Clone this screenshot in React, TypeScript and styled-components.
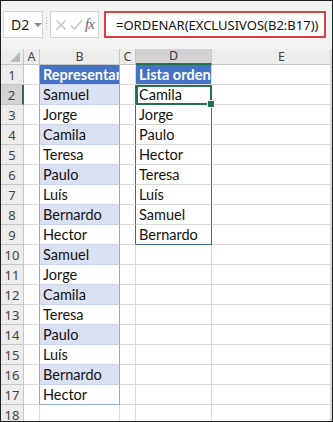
import React from "react";
import styled, { createGlobalStyle } from "styled-components";

const GlobalStyle = createGlobalStyle`
  html, body {
    margin: 0;
    padding: 0;
    background: #ffffff;
  }
`;

const cellFont = `"Lato", "Noto Sans", "Liberation Sans", sans-serif`;
const uiFont = `"Noto Sans", "Open Sans", "Liberation Sans", sans-serif`;

const grid = "#d9d9d9";
const tableEdge = "#8ea9db";
const spillEdge = "#3d63a8";
const green = "#217346";

const Frame = styled.div`
  width: 333px;
  height: 422px;
  box-sizing: border-box;
  border: 1px solid #1e1e1e;
  background: #f3f3f3;
  overflow: hidden;
  display: flex;
  flex-direction: column;
`;

const FormulaBar = styled.div`
  height: 48px;
  flex: none;
  box-sizing: border-box;
  padding: 10px 0 0 2px;
  display: flex;
  align-items: flex-start;
`;

const NameBox = styled.div`
  width: 40px;
  height: 27px;
  box-sizing: border-box;
  background: #fff;
  border: 1px solid #d4d4d4;
  display: flex;
  align-items: center;
  padding-left: 7px;
  font-family: ${uiFont};
  font-size: 14px;
  color: #222;
`;

const Caret = styled.span`
  margin-left: 5px;
  width: 0;
  height: 0;
  border-left: 4px solid transparent;
  border-right: 4px solid transparent;
  border-top: 4px solid #8a8a8a;
`;

const Grip = styled.div`
  width: 7px;
  height: 27px;
  display: flex;
  justify-content: center;
  align-items: center;
  &::before {
    content: "";
    width: 1px;
    height: 15px;
    background: repeating-linear-gradient(
      to bottom,
      #b8b8b8 0 1px,
      transparent 1px 3px
    );
  }
`;

const ActionBox = styled.div`
  width: 49px;
  height: 27px;
  box-sizing: border-box;
  background: #fff;
  border: 1px solid #d4d4d4;
  display: flex;
  align-items: center;
  justify-content: space-around;
  padding: 0 3px;
`;

const Fx = styled.span`
  font-family: "Liberation Serif", serif;
  font-style: italic;
  font-size: 15px;
  color: #666;
  letter-spacing: -1px;
`;

const FormulaInput = styled.div`
  margin-left: 5px;
  width: 222px;
  height: 27px;
  box-sizing: border-box;
  background: #fff;
  border: 2px solid #d9423f;
  display: flex;
  align-items: center;
  padding-left: 10px;
  font-family: ${uiFont};
  font-size: 13px;
  color: #111;
  white-space: nowrap;
  overflow: hidden;
`;

const SheetClip = styled.div`
  flex: 1;
  overflow: hidden;
  background: #fff;
  border-right: 2px solid #dcdcdc;
`;

const Sheet = styled.div`
  display: grid;
  grid-template-columns: 23px 16px 80px 16px 76px 140px;
  grid-template-rows: 16px;
  grid-auto-rows: 20px;
`;

const ColHead = styled.div<{ $active?: boolean }>`
  box-sizing: border-box;
  background: ${({ $active }) => ($active ? "#d2d2d2" : "#ececec")};
  border-right: 1px solid #c6c6c6;
  border-bottom: ${({ $active }) =>
    $active ? `2px solid ${green}` : "1px solid #c6c6c6"};
  font-family: ${uiFont};
  font-size: 12.5px;
  line-height: 14px;
  color: ${({ $active }) => ($active ? "#3c3c3c" : "#444")};
  display: flex;
  align-items: center;
  justify-content: center;
`;

const Corner = styled.div`
  position: relative;
  box-sizing: border-box;
  background: #ececec;
  border-right: 1px solid #c6c6c6;
  border-bottom: 1px solid #c6c6c6;
  &::after {
    content: "";
    position: absolute;
    right: 3px;
    bottom: 2px;
    width: 0;
    height: 0;
    border-left: 10px solid transparent;
    border-bottom: 10px solid #b9b9b9;
  }
`;

const RowHead = styled.div<{ $active?: boolean }>`
  box-sizing: border-box;
  background: ${({ $active }) => ($active ? "#d2d2d2" : "#ececec")};
  border-right: ${({ $active }) =>
    $active ? `2px solid ${green}` : "1px solid #c6c6c6"};
  border-bottom: 1px solid #c6c6c6;
  font-family: ${uiFont};
  font-size: 13px;
  color: #444;
  display: flex;
  align-items: center;
  justify-content: center;
`;

type CellProps = {
  $bg?: string;
  $head?: boolean;
  $right?: string;
  $bottom?: string;
  $selected?: boolean;
};

const Cell = styled.div<CellProps>`
  position: relative;
  box-sizing: border-box;
  background: ${({ $bg }) => $bg || "#fff"};
  border-right: 1px solid ${({ $right }) => $right || grid};
  border-bottom: 1px solid ${({ $bottom }) => $bottom || grid};
  padding-left: 3px;
  font-family: ${cellFont};
  font-size: 14.5px;
  font-weight: ${({ $head }) => ($head ? 700 : 400)};
  color: ${({ $head }) => ($head ? "#fff" : "#111")};
  display: flex;
  align-items: flex-end;
  padding-bottom: 1px;
  white-space: nowrap;
  overflow: hidden;
  ${({ $selected }) =>
    $selected &&
    `
    overflow: visible;
    outline: 2px solid ${green};
    outline-offset: -2px;
    z-index: 2;
  `}
`;

const FillHandle = styled.span`
  position: absolute;
  right: -4px;
  bottom: -4px;
  width: 6px;
  height: 6px;
  background: ${green};
  border: 1px solid #fff;
`;

const representantes = [
  "Samuel",
  "Jorge",
  "Camila",
  "Teresa",
  "Paulo",
  "Luís",
  "Bernardo",
  "Hector",
  "Samuel",
  "Jorge",
  "Camila",
  "Teresa",
  "Paulo",
  "Luís",
  "Bernardo",
  "Hector",
];

const ordenada = [
  "Camila",
  "Jorge",
  "Paulo",
  "Hector",
  "Teresa",
  "Luís",
  "Samuel",
  "Bernardo",
];

const ROWS = 18;

export default function App() {
  const rows = [];
  for (let r = 1; r <= ROWS; r++) {
    const inTable = r <= 17;
    const isHead = r === 1;
    const bValue = isHead ? "Representantes" : representantes[r - 2];
    const banded = !isHead && r % 2 === 0 && inTable;
    const bBg = isHead ? "#4472c4" : banded ? "#d9e1f2" : "#fff";
    const inSpill = r >= 2 && r <= 9;
    const dValue = isHead ? "Lista ordenada" : inSpill ? ordenada[r - 2] : "";

    rows.push(
      <React.Fragment key={r}>
        <RowHead $active={r === 2}>{r}</RowHead>
        <Cell $right={inTable ? tableEdge : grid} />
        <Cell
          $bg={inTable ? bBg : "#fff"}
          $head={isHead}
          $right={inTable ? tableEdge : grid}
          $bottom={r === 17 ? tableEdge : inTable ? "#c9d5ec" : grid}
        >
          {inTable ? bValue : ""}
        </Cell>
        <Cell $right={inSpill ? spillEdge : grid} />
        <Cell
          $bg={isHead ? "#4472c4" : "#fff"}
          $head={isHead}
          $right={inSpill ? spillEdge : grid}
          $bottom={r === 9 ? spillEdge : grid}
          $selected={r === 2}
        >
          {dValue}
          {r === 2 && <FillHandle />}
        </Cell>
        <Cell />
      </React.Fragment>
    );
  }

  return (
    <>
      <GlobalStyle />
      <Frame>
        <FormulaBar>
          <NameBox>
            D2
            <Caret />
          </NameBox>
          <Grip />
          <ActionBox>
            <svg width="12" height="12" viewBox="0 0 12 12">
              <path
                d="M1.5 1.5 L10.5 10.5 M10.5 1.5 L1.5 10.5"
                stroke="#c8c8c8"
                strokeWidth="1.6"
                fill="none"
              />
            </svg>
            <svg width="13" height="12" viewBox="0 0 13 12">
              <path
                d="M1 6.5 L4.5 10 L12 1.5"
                stroke="#c8c8c8"
                strokeWidth="1.6"
                fill="none"
              />
            </svg>
            <Fx>fx</Fx>
          </ActionBox>
          <FormulaInput>=ORDENAR(EXCLUSIVOS(B2:B17))</FormulaInput>
        </FormulaBar>
        <SheetClip>
          <Sheet>
            <Corner />
            <ColHead>A</ColHead>
            <ColHead>B</ColHead>
            <ColHead>C</ColHead>
            <ColHead $active>D</ColHead>
            <ColHead>E</ColHead>
            {rows}
          </Sheet>
        </SheetClip>
      </Frame>
    </>
  );
}
